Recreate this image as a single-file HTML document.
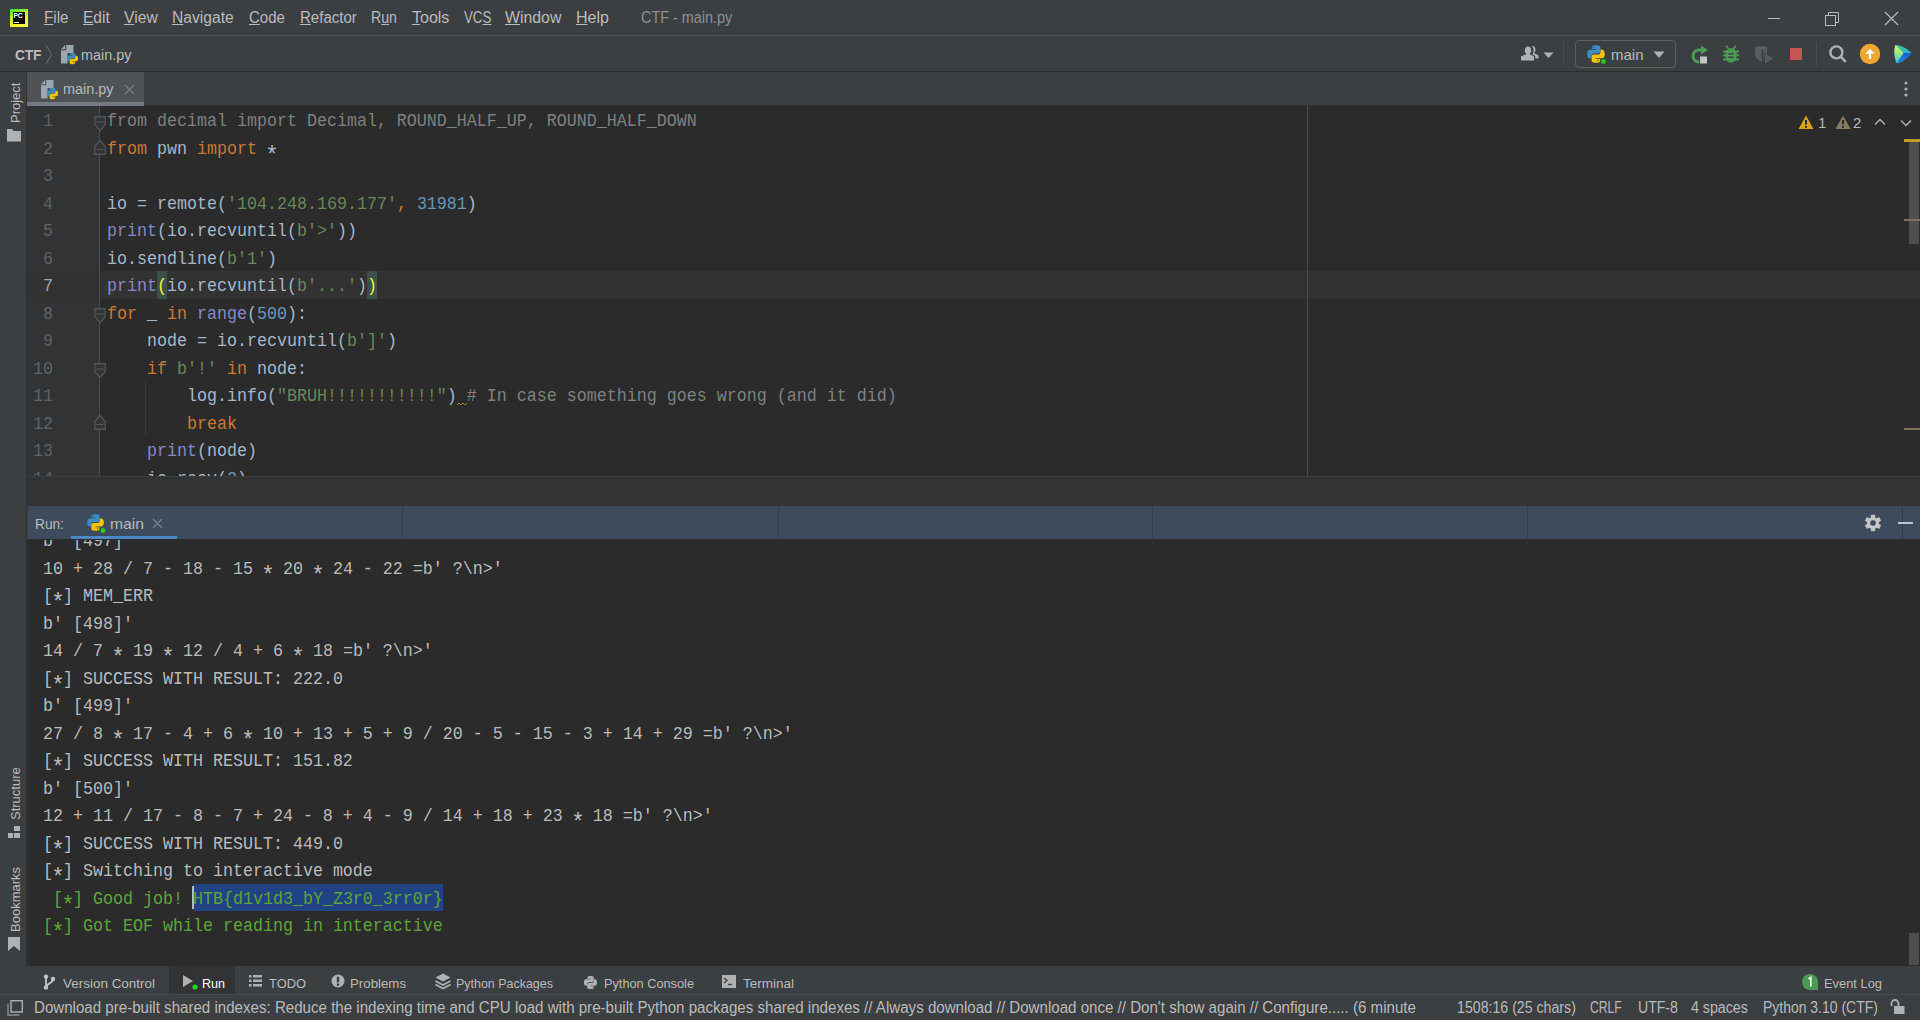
<!DOCTYPE html>
<html><head><meta charset="utf-8">
<style>
*{margin:0;padding:0;box-sizing:border-box}
html,body{width:1920px;height:1020px;overflow:hidden;background:#3C3F41;font-family:"Liberation Sans",sans-serif;color:#BBBBBB}
.a{position:absolute}
.ui{font-family:"Liberation Sans",sans-serif;font-size:15px;white-space:pre;line-height:18px}
.mono{font-family:"Liberation Mono",monospace;font-size:16.667px;white-space:pre;line-height:27.5px;transform:scaleY(1.09);transform-origin:0 18.19px}
.u{text-decoration:underline;text-underline-offset:1px}
/* code colors */
.k{color:#CC7832}.s{color:#6A8759}.n{color:#6897BB}.b{color:#8888C6}.c{color:#808080}.d{color:#A9B7C6}.g{color:#808080}
.gr{color:#5FA43A}
.ast{display:inline-block;width:10px;text-align:center;transform:translateY(6.5px) scale(1.35)}
</style></head>
<body>
<svg width="0" height="0" style="position:absolute"><defs>
<symbol id="py" viewBox="0 0 16 16"><path fill="#3D8CC4" d="M7.9 1C4.5 1 4.7 2.5 4.7 2.5V4H8V4.6H3.4C3.4 4.6 1 4.3 1 7.9C1 11.5 3.1 11.4 3.1 11.4H4.4V9.7C4.4 9.7 4.3 7.6 6.5 7.6H9.5C9.5 7.6 11.5 7.6 11.5 5.6V2.6C11.5 2.6 11.8 1 7.9 1Z"/><path fill="#F4C400" d="M8.1 15C11.5 15 11.3 13.5 11.3 13.5V12H8V11.4H12.6C12.6 11.4 15 11.7 15 8.1C15 4.5 12.9 4.6 12.9 4.6H11.6V6.3C11.6 6.3 11.7 8.4 9.5 8.4H6.5C6.5 8.4 4.5 8.4 4.5 10.4V13.4C4.5 13.4 4.2 15 8.1 15Z"/><circle cx="6.2" cy="2.8" r="0.6" fill="#2B4F6E"/><circle cx="9.8" cy="13.2" r="0.6" fill="#7A6200"/></symbol>
<symbol id="pyfile" viewBox="0 0 18 20"><path fill="#9AA7B0" d="M0 4.2L4.2 0V4.2Z"/><path fill="#9AA7B0" d="M5.2 0H12.5V8H6.5V18.5H0V5.2H5.2Z"/><use href="#py" x="5" y="7" width="13" height="13"/></symbol>
</defs></svg>
<!-- TITLE BAR -->
<div class="a" id="title" style="left:0;top:0;width:1920px;height:35px;background:#3C3F41"></div>
<!-- logo -->
<div class="a" style="left:10px;top:9px;width:18px;height:18px;background:linear-gradient(160deg,#2BE43A 0%,#B5F02C 35%,#F2F22A 65%,#FCF84A 100%)"></div>
<div class="a" style="left:13px;top:12px;width:12px;height:12px;background:#000"></div>
<div class="a" style="left:13.5px;top:11.5px;font:bold 6.8px/7px 'Liberation Sans',sans-serif;color:#fff;letter-spacing:-0.2px;white-space:pre">PC</div>
<div class="a" style="left:14px;top:22px;width:4.5px;height:1px;background:#fff"></div>
<div class="a ui menu" style="left:44px;top:9px;font-size:16px;transform:scaleX(0.947);transform-origin:0 0"><span class="u">F</span>ile</div>
<div class="a ui menu" style="left:83px;top:9px;font-size:16px;transform:scaleX(0.97);transform-origin:0 0"><span class="u">E</span>dit</div>
<div class="a ui menu" style="left:124px;top:9px;font-size:16px;transform:scaleX(0.98);transform-origin:0 0"><span class="u">V</span>iew</div>
<div class="a ui menu" style="left:172px;top:9px;font-size:16px;transform:scaleX(0.977);transform-origin:0 0"><span class="u">N</span>avigate</div>
<div class="a ui menu" style="left:249px;top:9px;font-size:16px;transform:scaleX(0.935);transform-origin:0 0"><span class="u">C</span>ode</div>
<div class="a ui menu" style="left:300px;top:9px;font-size:16px;transform:scaleX(0.94);transform-origin:0 0"><span class="u">R</span>efactor</div>
<div class="a ui menu" style="left:371px;top:9px;font-size:16px;transform:scaleX(0.883);transform-origin:0 0">R<span class="u">u</span>n</div>
<div class="a ui menu" style="left:412px;top:9px;font-size:16px;transform:scaleX(1.0);transform-origin:0 0"><span class="u">T</span>ools</div>
<div class="a ui menu" style="left:464px;top:9px;font-size:16px;transform:scaleX(0.83);transform-origin:0 0">VC<span class="u">S</span></div>
<div class="a ui menu" style="left:505px;top:9px;font-size:16px;transform:scaleX(0.99);transform-origin:0 0"><span class="u">W</span>indow</div>
<div class="a ui menu" style="left:576px;top:9px;font-size:16px;transform:scaleX(1.0);transform-origin:0 0"><span class="u">H</span>elp</div>
<div class="a ui" style="left:641px;top:9px;font-size:16px;color:#8F9193;transform:scaleX(0.9);transform-origin:0 0">CTF - main.py</div>
<div class="a" style="left:1768px;top:18px;width:12px;height:1px;background:#BBBBBB"></div>
<svg class="a" style="left:1823px;top:10px" width="20" height="18" viewBox="0 0 20 18"><rect x="2.5" y="5.5" width="10" height="10" fill="none" stroke="#BBBBBB"/><path d="M5.5 5.5V2.5H15.5V12.5H12.5" fill="none" stroke="#BBBBBB"/></svg>
<svg class="a" style="left:1884px;top:11px" width="15" height="15" viewBox="0 0 15 15"><path d="M1 1L14 14M14 1L1 14" stroke="#BBBBBB" stroke-width="1.2"/></svg>
<div class="a" style="left:0;top:35px;width:1920px;height:1px;background:#515455"></div>

<!-- NAV BAR -->
<div class="a ui" style="left:15px;top:46px;font-weight:bold;color:#BBBBBB;letter-spacing:-0.2px;transform:scaleX(0.92);transform-origin:0 0">CTF</div>
<svg class="a" style="left:45px;top:44px" width="8" height="21" viewBox="0 0 8 21"><path d="M1 1L6.5 10.5L1 20" fill="none" stroke="#6E7072" stroke-width="1"/></svg>
<svg class="a" style="left:61px;top:45px" width="18" height="20"><use href="#pyfile"/></svg>
<div class="a ui" style="left:81px;top:46px;color:#BBBBBB;transform:scaleX(0.96);transform-origin:0 0">main.py</div>
<div class="a" style="left:0;top:71px;width:1920px;height:1px;background:#2B2B2B"></div>

<!-- nav right -->
<svg class="a" style="left:1520px;top:45px" width="20" height="17" viewBox="0 0 20 17"><path fill="#AFB1B3" d="M8 1.5C5.8 1.5 4.8 3.3 4.8 5.3C4.8 7 5.5 8.3 6.5 9L1 11.5V15.5H14V11.5L9.5 9C10.5 8.3 11.2 7 11.2 5.3C11.2 3.3 10.2 1.5 8 1.5Z"/><path fill="#AFB1B3" d="M12.5 1C14.6 1 15.5 2.8 15.5 4.6C15.5 6.2 14.9 7.4 14 8.1L18.5 10.3V13.5H15.2V11L12.5 9.4C13.3 8.2 13.6 6.9 13.6 5.5C13.6 3.6 13.1 2.2 11.9 1.1Z"/></svg>
<svg class="a" style="left:1543px;top:52px" width="11" height="7" viewBox="0 0 11 7"><path d="M0.5 0.5H10.5L5.5 6Z" fill="#AFB1B3"/></svg>
<div class="a" style="left:1563px;top:42px;width:1px;height:24px;background:#4A4D4F"></div>
<div class="a" style="left:1575px;top:40px;width:101px;height:28px;border:1px solid #5E6060;border-radius:4px"></div>
<svg class="a" style="left:1586px;top:44px" width="21" height="21"><use href="#py" width="20" height="20"/><circle cx="17.5" cy="17.5" r="2.7" fill="#22D422" stroke="#3C3F41" stroke-width="0.8"/></svg>
<div class="a ui" style="left:1611px;top:46px;color:#BBBBBB">main</div>
<svg class="a" style="left:1653px;top:51px" width="12" height="8" viewBox="0 0 12 8"><path d="M0.5 0.5H11.5L6 7Z" fill="#AFB1B3"/></svg>
<!-- rerun -->
<svg class="a" style="left:1690px;top:45px" width="20" height="20" viewBox="0 0 20 20"><path d="M11.5 5H9A6 6 0 0 0 9 17" fill="none" stroke="#499C54" stroke-width="3"/><path d="M11 0.5L18 5L11 9.5Z" fill="#499C54"/><rect x="10" y="11.5" width="7" height="7" fill="#C4C4C4"/></svg>
<!-- debug bug -->
<svg class="a" style="left:1722px;top:45px" width="18" height="19" viewBox="0 0 18 19"><path d="M4 0.8L6.8 4.2M14 0.8L11.2 4.2" stroke="#499C54" stroke-width="1.8"/><ellipse cx="9" cy="10.5" rx="5.8" ry="7.3" fill="#499C54"/><path d="M1 6.5H17M1 10.3H17M1 14.5H17" stroke="#499C54" stroke-width="1.8"/><path d="M6.5 8.8H11.5M6.5 12.3H11.5" stroke="#3C3F41" stroke-width="1.4"/></svg>
<!-- coverage -->
<svg class="a" style="left:1754px;top:45px" width="21" height="20" viewBox="0 0 21 20"><path d="M1 2Q7 0 13 2V9Q13 13.5 7 16.5Q1 13.5 1 9Z" fill="#5A5C5E"/><path d="M8.5 4.5V15" stroke="#3C3F41" stroke-width="1.6"/><path d="M10.5 8L20 13.5L10.5 19Z" fill="#5A5C5E" stroke="#3C3F41" stroke-width="0.8"/></svg>
<!-- stop -->
<div class="a" style="left:1790px;top:48px;width:12px;height:12px;background:#C75450"></div>
<div class="a" style="left:1816px;top:42px;width:1px;height:24px;background:#4A4D4F"></div>
<!-- search -->
<svg class="a" style="left:1828px;top:44px" width="20" height="20" viewBox="0 0 20 20"><circle cx="8.4" cy="8.4" r="6" fill="none" stroke="#AFB1B3" stroke-width="2.4"/><path d="M12.6 12.6L17.8 17.8" stroke="#AFB1B3" stroke-width="2.6"/></svg>
<!-- update -->
<svg class="a" style="left:1859px;top:43px" width="22" height="22" viewBox="0 0 22 22"><circle cx="11" cy="11" r="10.2" fill="#F0A732"/><path d="M11 5.8L15.8 10.8H12.1V15.9H9.9V10.8H6.2Z" fill="#FFFFFF"/></svg>
<!-- toolbox logo -->
<svg class="a" style="left:1893px;top:44px" width="21" height="20" viewBox="0 0 21 20"><defs>
<linearGradient id="tbl" x1="0" y1="0" x2="0" y2="1"><stop offset="0" stop-color="#F6F350"/><stop offset="0.5" stop-color="#9BE38A"/><stop offset="1" stop-color="#1FCDEB"/></linearGradient>
<linearGradient id="tbu" x1="0" y1="0" x2="1" y2="1"><stop offset="0" stop-color="#3DD68C"/><stop offset="1" stop-color="#1E9BE8"/></linearGradient>
<linearGradient id="tbd" x1="0" y1="0" x2="0" y2="1"><stop offset="0" stop-color="#1A5FCF"/><stop offset="1" stop-color="#1C8CEB"/></linearGradient></defs>
<path d="M2.5 1C7 1 14 4 18.5 9C14 14.5 8 19 3.5 19C1.5 14 0.5 6 2.5 1Z" fill="url(#tbu)"/>
<path d="M10.5 9H18.5C14 14.5 8 19 3.5 19Z" fill="url(#tbd)"/>
<path d="M2.5 1L10.5 9L3.5 19C1.5 14 0.5 6 2.5 1Z" fill="url(#tbl)"/>
</svg>

<!-- LEFT STRIP -->
<div class="a" style="left:26px;top:72px;width:1px;height:894px;background:#323232"></div>

<!-- TABS -->
<div class="a" style="left:27px;top:72px;width:117px;height:30px;background:#4E5254"></div>
<div class="a" style="left:27px;top:102px;width:117px;height:4px;background:#747A80"></div>
<svg class="a" style="left:41px;top:80px" width="18" height="20"><use href="#pyfile"/></svg>
<div class="a ui" style="left:63px;top:80px;color:#BBBBBB;transform:scaleX(0.96);transform-origin:0 0">main.py</div>
<svg class="a" style="left:124px;top:84px" width="11" height="11" viewBox="0 0 11 11"><path d="M1 1L10 10M10 1L1 10" stroke="#7E8082" stroke-width="1.1"/></svg>
<svg class="a" style="left:1902px;top:80px" width="8" height="18" viewBox="0 0 8 18"><circle cx="4" cy="3" r="1.6" fill="#AFB1B3"/><circle cx="4" cy="9" r="1.6" fill="#AFB1B3"/><circle cx="4" cy="15" r="1.6" fill="#AFB1B3"/></svg>

<!-- EDITOR -->
<div class="a" style="left:144px;top:105px;width:1776px;height:1px;background:#323335"></div>
<div class="a" id="gutter" style="left:27px;top:106px;width:73px;height:370px;background:#313335"></div>
<div class="a" id="editor" style="left:100px;top:106px;width:1820px;height:370px;background:#2B2B2B"></div>
<!--EDITOR_CONTENT-->
<div class="a" style="left:27px;top:271.0px;width:1893px;height:27.5px;background:#323232"></div>
<div class="a" style="left:157px;top:271.0px;width:10px;height:27.5px;background:#3B514D"></div>
<div class="a" style="left:367px;top:271.0px;width:10px;height:27.5px;background:#3B514D"></div>
<div class="a mono ln" style="left:23px;width:30px;text-align:right;top:108px;color:#606366">1</div>
<div class="a mono ln" style="left:23px;width:30px;text-align:right;top:136px;color:#606366">2</div>
<div class="a mono ln" style="left:23px;width:30px;text-align:right;top:163px;color:#606366">3</div>
<div class="a mono ln" style="left:23px;width:30px;text-align:right;top:191px;color:#606366">4</div>
<div class="a mono ln" style="left:23px;width:30px;text-align:right;top:218px;color:#606366">5</div>
<div class="a mono ln" style="left:23px;width:30px;text-align:right;top:246px;color:#606366">6</div>
<div class="a mono ln" style="left:23px;width:30px;text-align:right;top:273px;color:#A4A3A3">7</div>
<div class="a mono ln" style="left:23px;width:30px;text-align:right;top:301px;color:#606366">8</div>
<div class="a mono ln" style="left:23px;width:30px;text-align:right;top:328px;color:#606366">9</div>
<div class="a mono ln" style="left:23px;width:30px;text-align:right;top:356px;color:#606366">10</div>
<div class="a mono ln" style="left:23px;width:30px;text-align:right;top:383px;color:#606366">11</div>
<div class="a mono ln" style="left:23px;width:30px;text-align:right;top:411px;color:#606366">12</div>
<div class="a mono ln" style="left:23px;width:30px;text-align:right;top:438px;color:#606366">13</div>
<div class="a mono ln" style="left:23px;width:30px;text-align:right;top:466px;color:#606366">14</div>
<div class="a mono code" style="left:107px;top:108px"><span class="g">from decimal import Decimal, ROUND_HALF_UP, ROUND_HALF_DOWN</span></div>
<div class="a mono code" style="left:107px;top:136px"><span class="k">from</span><span class="d"> pwn </span><span class="k">import</span><span class="d"> <span class="ast">*</span></span></div>
<div class="a mono code" style="left:107px;top:163px"></div>
<div class="a mono code" style="left:107px;top:191px"><span class="d">io = remote(</span><span class="s">'104.248.169.177'</span><span class="k">, </span><span class="n">31981</span><span class="d">)</span></div>
<div class="a mono code" style="left:107px;top:218px"><span class="b">print</span><span class="d">(io.recvuntil(</span><span class="s">b'&gt;'</span><span class="d">))</span></div>
<div class="a mono code" style="left:107px;top:246px"><span class="d">io.sendline(</span><span class="s">b'1'</span><span class="d">)</span></div>
<div class="a mono code" style="left:107px;top:273px"><span class="b">print</span><span style="color:#FFEF28">(</span><span class="d">io.recvuntil(</span><span class="s">b'...'</span><span class="d">)</span><span style="color:#FFEF28">)</span></div>
<div class="a mono code" style="left:107px;top:301px"><span class="k">for</span><span class="d"> _ </span><span class="k">in</span><span class="d"> </span><span class="b">range</span><span class="d">(</span><span class="n">500</span><span class="d">):</span></div>
<div class="a mono code" style="left:107px;top:328px"><span class="d">    node = io.recvuntil(</span><span class="s">b']'</span><span class="d">)</span></div>
<div class="a mono code" style="left:107px;top:356px"><span class="d">    </span><span class="k">if</span><span class="d"> </span><span class="s">b'!'</span><span class="d"> </span><span class="k">in</span><span class="d"> node:</span></div>
<div class="a mono code" style="left:107px;top:383px"><span class="d">        log.info(</span><span class="s">"BRUH!!!!!!!!!!!"</span><span class="d">)</span><span class="d"> </span><span class="c"># In case something goes wrong (and it did)</span></div>
<div class="a mono code" style="left:107px;top:411px"><span class="d">        </span><span class="k">break</span></div>
<div class="a mono code" style="left:107px;top:438px"><span class="d">    </span><span class="b">print</span><span class="d">(node)</span></div>
<div class="a mono code" style="left:107px;top:466px"><span class="d">    io.recv(</span><span class="n">2</span><span class="d">)</span></div>
<div class="a" style="left:99px;top:106px;width:1px;height:370px;background:#4B4B4B"></div>
<svg class="a" style="left:94px;top:116px" width="12" height="16" viewBox="0 0 12 16"><path d="M0.75 0.75H11.25V8.5L6 14.5L0.75 8.5Z" fill="#313335" stroke="#555555" stroke-width="1.3"/><path d="M2.5 6H9.5" stroke="#555555" stroke-width="1.2"/></svg>
<svg class="a" style="left:94px;top:308px" width="12" height="16" viewBox="0 0 12 16"><path d="M0.75 0.75H11.25V8.5L6 14.5L0.75 8.5Z" fill="#313335" stroke="#555555" stroke-width="1.3"/><path d="M2.5 6H9.5" stroke="#555555" stroke-width="1.2"/></svg>
<svg class="a" style="left:94px;top:363px" width="12" height="16" viewBox="0 0 12 16"><path d="M0.75 0.75H11.25V8.5L6 14.5L0.75 8.5Z" fill="#313335" stroke="#555555" stroke-width="1.3"/><path d="M2.5 6H9.5" stroke="#555555" stroke-width="1.2"/></svg>
<svg class="a" style="left:94px;top:139px" width="12" height="16" viewBox="0 0 12 16"><path d="M0.75 15.25H11.25V7.5L6 1.5L0.75 7.5Z" fill="#313335" stroke="#555555" stroke-width="1.3"/><path d="M2.5 10.5H9.5" stroke="#555555" stroke-width="1.2"/></svg>
<svg class="a" style="left:94px;top:414px" width="12" height="16" viewBox="0 0 12 16"><path d="M0.75 15.25H11.25V7.5L6 1.5L0.75 7.5Z" fill="#313335" stroke="#555555" stroke-width="1.3"/><path d="M2.5 10.5H9.5" stroke="#555555" stroke-width="1.2"/></svg>
<div class="a" style="left:145px;top:381px;width:1px;height:55px;background:#393939"></div>
<svg class="a" style="left:457px;top:402px" width="11" height="4" viewBox="0 0 11 4"><path d="M0 3L2 1L4 3L6 1L8 3L10 1" fill="none" stroke="#A08A3A" stroke-width="1"/></svg>
<div class="a" style="left:1307px;top:106px;width:1px;height:370px;background:#4B4B4B"></div>
<svg class="a" style="left:1798px;top:115px" width="16" height="15" viewBox="0 0 16 15"><path d="M8 0.5L15.5 14H0.5Z" fill="#D9A21E"/><rect x="7" y="5" width="2" height="4.5" fill="#2B2B2B"/><rect x="7" y="10.8" width="2" height="2" fill="#2B2B2B"/></svg>
<div class="a ui" style="left:1818px;top:114px;color:#BBBBBB">1</div>
<svg class="a" style="left:1835px;top:115px" width="16" height="15" viewBox="0 0 16 15"><path d="M8 0.5L15.5 14H0.5Z" fill="#857C62"/><rect x="7" y="5" width="2" height="4.5" fill="#2B2B2B"/><rect x="7" y="10.8" width="2" height="2" fill="#2B2B2B"/></svg>
<div class="a ui" style="left:1853px;top:114px;color:#BBBBBB">2</div>
<svg class="a" style="left:1874px;top:118px" width="12" height="8" viewBox="0 0 12 8"><path d="M1 6.5L6 1.5L11 6.5" fill="none" stroke="#AFB1B3" stroke-width="1.5"/></svg>
<svg class="a" style="left:1900px;top:119px" width="12" height="8" viewBox="0 0 12 8"><path d="M1 1.5L6 6.5L11 1.5" fill="none" stroke="#AFB1B3" stroke-width="1.5"/></svg>
<div class="a" style="left:1909px;top:140px;width:10px;height:104px;background:#4E4E4E"></div>
<div class="a" style="left:1904px;top:139px;width:16px;height:3px;background:#C49B23"></div>
<div class="a" style="left:1904px;top:219px;width:16px;height:2px;background:#7E7560"></div>
<div class="a" style="left:1904px;top:428px;width:16px;height:2px;background:#7E7560"></div>
<!--/EDITOR_CONTENT-->
<div class="a" style="left:27px;top:476px;width:1893px;height:30px;background:#313335"></div>
<div class="a" style="left:27px;top:476px;width:1893px;height:1px;background:#3A3B3C"></div>

<!-- RUN HEADER -->
<div class="a" style="left:28px;top:506px;width:1892px;height:33px;background:#3D4B5C"></div>
<div class="a" style="left:71px;top:536px;width:106px;height:4px;background:#4A88C7"></div>

<!-- CONSOLE -->
<div class="a" id="console" style="left:27px;top:539px;width:1893px;height:427px;background:#2B2B2B"></div>

<!-- BOTTOM TOOLBAR -->
<div class="a" style="left:0;top:966px;width:1920px;height:28px;background:#3C3F41"></div>
<div class="a" style="left:169px;top:966px;width:66px;height:28px;background:#313335"></div>
<div class="a" style="left:0;top:994px;width:1920px;height:1px;background:#48494A"></div>

<!-- STATUS BAR -->
<div class="a" style="left:0;top:995px;width:1920px;height:25px;background:#3C3F41"></div>

<!--REST-->
<!-- left strip labels -->
<div class="a" style="left:7px;top:123px;width:70px;height:18px;transform:rotate(-90deg);transform-origin:0 0;font-size:13px;line-height:18px;color:#BBBBBB;white-space:pre">Project</div>
<svg class="a" style="left:7px;top:129px" width="14" height="13" viewBox="0 0 14 13"><path d="M0 0H5L6.5 2H14V12.5H0Z" fill="#AFB1B3"/></svg>
<div class="a" style="left:7px;top:820px;width:80px;height:18px;transform:rotate(-90deg);transform-origin:0 0;font-size:13px;line-height:18px;color:#BBBBBB;white-space:pre">Structure</div>
<svg class="a" style="left:8px;top:826px" width="14" height="14" viewBox="0 0 14 14"><rect x="6" y="0" width="6" height="5" fill="#AFB1B3"/><rect x="0" y="7" width="5" height="5" fill="#AFB1B3"/><rect x="6" y="7" width="6" height="5" fill="#AFB1B3"/></svg>
<div class="a" style="left:7px;top:932px;width:80px;height:18px;transform:rotate(-90deg);transform-origin:0 0;font-size:13px;line-height:18px;color:#BBBBBB;white-space:pre">Bookmarks</div>
<svg class="a" style="left:8px;top:937px" width="13" height="15" viewBox="0 0 13 15"><path d="M0 0H12V14L6 9L0 14Z" fill="#AFB1B3"/></svg>

<!-- run header content -->
<div class="a" style="left:35px;top:514.5px;font-size:15px;line-height:18px;white-space:pre;color:#BBBBBB;transform:scaleX(0.9124);transform-origin:0 0;">Run:</div>
<svg class="a" style="left:86px;top:513px" width="21" height="21"><use href="#py" width="19" height="19"/><circle cx="17" cy="17.5" r="2.8" fill="#22D422" stroke="#3D4B5C" stroke-width="0.8"/></svg>
<div class="a" style="left:110px;top:514.5px;font-size:15px;line-height:18px;white-space:pre;color:#BBBBBB;transform:scaleX(1.0471);transform-origin:0 0;">main</div>
<svg class="a" style="left:152px;top:518px" width="11" height="11" viewBox="0 0 11 11"><path d="M1 1L10 10M10 1L1 10" stroke="#7E8590" stroke-width="1.1"/></svg>
<div class="a" style="left:402px;top:506px;width:1px;height:33px;background:#33404E"></div>
<div class="a" style="left:778px;top:506px;width:1px;height:33px;background:#33404E"></div>
<div class="a" style="left:1152px;top:506px;width:1px;height:33px;background:#33404E"></div>
<div class="a" style="left:1527px;top:506px;width:1px;height:33px;background:#33404E"></div>
<div class="a" style="left:1902px;top:506px;width:1px;height:33px;background:#2F3A46"></div>
<svg class="a" style="left:1864px;top:514px" width="18" height="18" viewBox="0 0 18 18"><g fill="#C4C4C4" transform="translate(9 9)"><circle r="6"/><rect x="-2.1" y="-8.2" width="4.2" height="16.4"/><rect x="-2.1" y="-8.2" width="4.2" height="16.4" transform="rotate(60)"/><rect x="-2.1" y="-8.2" width="4.2" height="16.4" transform="rotate(120)"/></g><circle cx="9" cy="9" r="2.8" fill="#3D4B5C"/></svg>
<div class="a" style="left:1898px;top:522px;width:15px;height:2px;background:#C4C4C4"></div>

<!-- console content -->
<div class="a" style="left:27px;top:540px;width:1893px;height:426px;overflow:hidden">
<div class="a" style="left:1px;top:0;width:1px;height:426px;background:#323232"></div>
<div class="a mono" style="left:16px;top:-12px;color:#BBBBBB">b' [497]'</div>
<div class="a mono" style="left:16px;top:16px;color:#BBBBBB">10 + 28 / 7 - 18 - 15 <span class="ast">*</span> 20 <span class="ast">*</span> 24 - 22 =b' ?\n&gt;'</div>
<div class="a mono" style="left:16px;top:43px;color:#BBBBBB">[<span class="ast">*</span>] MEM_ERR</div>
<div class="a mono" style="left:16px;top:71px;color:#BBBBBB">b' [498]'</div>
<div class="a mono" style="left:16px;top:98px;color:#BBBBBB">14 / 7 <span class="ast">*</span> 19 <span class="ast">*</span> 12 / 4 + 6 <span class="ast">*</span> 18 =b' ?\n&gt;'</div>
<div class="a mono" style="left:16px;top:126px;color:#BBBBBB">[<span class="ast">*</span>] SUCCESS WITH RESULT: 222.0</div>
<div class="a mono" style="left:16px;top:153px;color:#BBBBBB">b' [499]'</div>
<div class="a mono" style="left:16px;top:181px;color:#BBBBBB">27 / 8 <span class="ast">*</span> 17 - 4 + 6 <span class="ast">*</span> 10 + 13 + 5 + 9 / 20 - 5 - 15 - 3 + 14 + 29 =b' ?\n&gt;'</div>
<div class="a mono" style="left:16px;top:208px;color:#BBBBBB">[<span class="ast">*</span>] SUCCESS WITH RESULT: 151.82</div>
<div class="a mono" style="left:16px;top:236px;color:#BBBBBB">b' [500]'</div>
<div class="a mono" style="left:16px;top:263px;color:#BBBBBB">12 + 11 / 17 - 8 - 7 + 24 - 8 + 4 - 9 / 14 + 18 + 23 <span class="ast">*</span> 18 =b' ?\n&gt;'</div>
<div class="a mono" style="left:16px;top:291px;color:#BBBBBB">[<span class="ast">*</span>] SUCCESS WITH RESULT: 449.0</div>
<div class="a mono" style="left:16px;top:318px;color:#BBBBBB">[<span class="ast">*</span>] Switching to interactive mode</div>
<div class="a" style="left:166px;top:343.75px;width:250px;height:27.5px;background:#214283"></div>
<div class="a mono gr" style="left:16px;top:346.00px"> [<span class="ast">*</span>] Good job! HTB{d1v1d3_bY_Z3r0_3rr0r}</div>
<div class="a" style="left:165px;top:345.75px;width:2px;height:23px;background:#BBBBBB"></div>
<div class="a mono gr" style="left:16px;top:373px">[<span class="ast">*</span>] Got EOF while reading in interactive</div>
<div class="a" style="left:1882px;top:393px;width:10px;height:32px;background:#4E4E4E"></div>
</div>
<!-- bottom toolbar content -->
<svg class="a" style="left:43px;top:974px" width="13" height="16" viewBox="0 0 13 16"><circle cx="3" cy="2.6" r="2.2" fill="#C4C4C4"/><circle cx="10" cy="5" r="2.2" fill="#C4C4C4"/><circle cx="3" cy="13.4" r="2.2" fill="#C4C4C4"/><path d="M3 2.6V13.4M10 5C10 10 3.5 9 3 12.5" fill="none" stroke="#C4C4C4" stroke-width="1.8"/></svg>
<div class="a" style="left:63px;top:975px;font-size:13px;line-height:18px;white-space:pre;color:#BBBBBB;transform:scaleX(1.0354);transform-origin:0 0;">Version Control</div>
<svg class="a" style="left:182px;top:974px" width="16" height="16" viewBox="0 0 16 16"><path d="M1 1L11 7L1 13Z" fill="#AFB1B3"/><circle cx="13" cy="13" r="2.6" fill="#22D422"/></svg>
<div class="a" style="left:202px;top:975px;font-size:13px;line-height:18px;white-space:pre;color:#FFFFFF;transform:scaleX(0.9624);transform-origin:0 0;">Run</div>
<svg class="a" style="left:249px;top:974px" width="14" height="14" viewBox="0 0 14 14"><path fill="#AFB1B3" d="M0 1H2.5V3.5H0ZM4 1H13V3.5H4ZM0 5.5H2.5V8H0ZM4 5.5H13V8H4ZM0 10H2.5V12.5H0ZM4 10H13V12.5H4Z"/></svg>
<div class="a" style="left:269px;top:975px;font-size:13px;line-height:18px;white-space:pre;color:#BBBBBB;transform:scaleX(0.9910);transform-origin:0 0;">TODO</div>
<svg class="a" style="left:331px;top:974px" width="14" height="14" viewBox="0 0 14 14"><circle cx="7" cy="7" r="6.5" fill="#AFB1B3"/><rect x="5.8" y="2.8" width="2.4" height="5.5" fill="#3C3F41"/><rect x="5.8" y="9.5" width="2.4" height="2.2" fill="#3C3F41"/></svg>
<div class="a" style="left:350px;top:975px;font-size:13px;line-height:18px;white-space:pre;color:#BBBBBB;transform:scaleX(1.0200);transform-origin:0 0;">Problems</div>
<svg class="a" style="left:435px;top:973px" width="16" height="17" viewBox="0 0 16 17"><path d="M8 0.5L15.5 4.5L8 8.5L0.5 4.5Z" fill="#AFB1B3"/><path d="M0.5 8L8 12L15.5 8" fill="none" stroke="#AFB1B3" stroke-width="1.8"/><path d="M0.5 11.5L8 15.5L15.5 11.5" fill="none" stroke="#AFB1B3" stroke-width="1.8"/></svg>
<div class="a" style="left:456px;top:975px;font-size:13px;line-height:18px;white-space:pre;color:#BBBBBB;transform:scaleX(0.9582);transform-origin:0 0;">Python Packages</div>
<svg class="a" style="left:583px;top:975px" width="15" height="15" viewBox="0 0 16 16"><path fill="#AFB1B3" d="M7.9 1C4.5 1 4.7 2.5 4.7 2.5V4H8V4.6H3.4C3.4 4.6 1 4.3 1 7.9C1 11.5 3.1 11.4 3.1 11.4H4.4V9.7C4.4 9.7 4.3 7.6 6.5 7.6H9.5C9.5 7.6 11.5 7.6 11.5 5.6V2.6C11.5 2.6 11.8 1 7.9 1Z"/><path fill="#AFB1B3" d="M8.1 15C11.5 15 11.3 13.5 11.3 13.5V12H8V11.4H12.6C12.6 11.4 15 11.7 15 8.1C15 4.5 12.9 4.6 12.9 4.6H11.6V6.3C11.6 6.3 11.7 8.4 9.5 8.4H6.5C6.5 8.4 4.5 8.4 4.5 10.4V13.4C4.5 13.4 4.2 15 8.1 15Z"/></svg>
<div class="a" style="left:604px;top:975px;font-size:13px;line-height:18px;white-space:pre;color:#BBBBBB;transform:scaleX(0.9804);transform-origin:0 0;">Python Console</div>
<svg class="a" style="left:722px;top:975px" width="14" height="13" viewBox="0 0 14 13"><rect x="0" y="0" width="14" height="13" fill="#AFB1B3"/><path d="M2 3L5 5.5L2 8" fill="none" stroke="#3C3F41" stroke-width="1.3"/><path d="M6 9.5H10" stroke="#3C3F41" stroke-width="1.3"/></svg>
<div class="a" style="left:743px;top:975px;font-size:13px;line-height:18px;white-space:pre;color:#BBBBBB;transform:scaleX(1.0390);transform-origin:0 0;">Terminal</div>
<svg class="a" style="left:1802px;top:974px" width="16" height="16" viewBox="0 0 16 16"><path d="M8 0A8 8 0 0 0 0 8A8 8 0 0 0 8 16H16V8A8 8 0 0 0 8 0Z" fill="#499C54"/><path d="M6.5 5L8.8 3.5V12.5" fill="none" stroke="#FFFFFF" stroke-width="1.6"/></svg>
<div class="a" style="left:1824px;top:975px;font-size:13px;line-height:18px;white-space:pre;color:#BBBBBB;transform:scaleX(0.9905);transform-origin:0 0;">Event Log</div>

<!-- status content -->
<svg class="a" style="left:7px;top:1000px" width="16" height="16" viewBox="0 0 16 16"><path d="M1 3.5V15H12.5" fill="none" stroke="#8C8E90" stroke-width="1.4"/><rect x="4" y="0.7" width="11.3" height="11.3" fill="none" stroke="#AFB1B3" stroke-width="1.4"/></svg>
<div class="a" style="left:34px;top:999px;font-size:16px;line-height:18px;white-space:pre;color:#BBBBBB;transform:scaleX(0.9437);transform-origin:0 0;">Download pre-built shared indexes: Reduce the indexing time and CPU load with pre-built Python packages shared indexes // Always download // Download once // Don't show again // Configure..... (6 minute</div>
<div class="a" style="left:1457px;top:999px;font-size:16px;line-height:18px;white-space:pre;color:#BBBBBB;transform:scaleX(0.8851);transform-origin:0 0;">1508:16 (25 chars)</div>
<div class="a" style="left:1590px;top:999px;font-size:16px;line-height:18px;white-space:pre;color:#BBBBBB;transform:scaleX(0.7602);transform-origin:0 0;">CRLF</div>
<div class="a" style="left:1638px;top:999px;font-size:16px;line-height:18px;white-space:pre;color:#BBBBBB;transform:scaleX(0.8798);transform-origin:0 0;">UTF-8</div>
<div class="a" style="left:1691px;top:999px;font-size:16px;line-height:18px;white-space:pre;color:#BBBBBB;transform:scaleX(0.8882);transform-origin:0 0;">4 spaces</div>
<div class="a" style="left:1763px;top:999px;font-size:16px;line-height:18px;white-space:pre;color:#BBBBBB;transform:scaleX(0.8728);transform-origin:0 0;">Python 3.10 (CTF)</div>
<svg class="a" style="left:1890px;top:999px" width="15" height="16" viewBox="0 0 15 16"><path d="M1.5 7V4.5A3.5 3.5 0 0 1 8.5 4.5V7" fill="none" stroke="#AFB1B3" stroke-width="1.8"/><rect x="4" y="7" width="10.5" height="8" fill="#AFB1B3"/></svg>

<!--/REST-->
</body></html>
